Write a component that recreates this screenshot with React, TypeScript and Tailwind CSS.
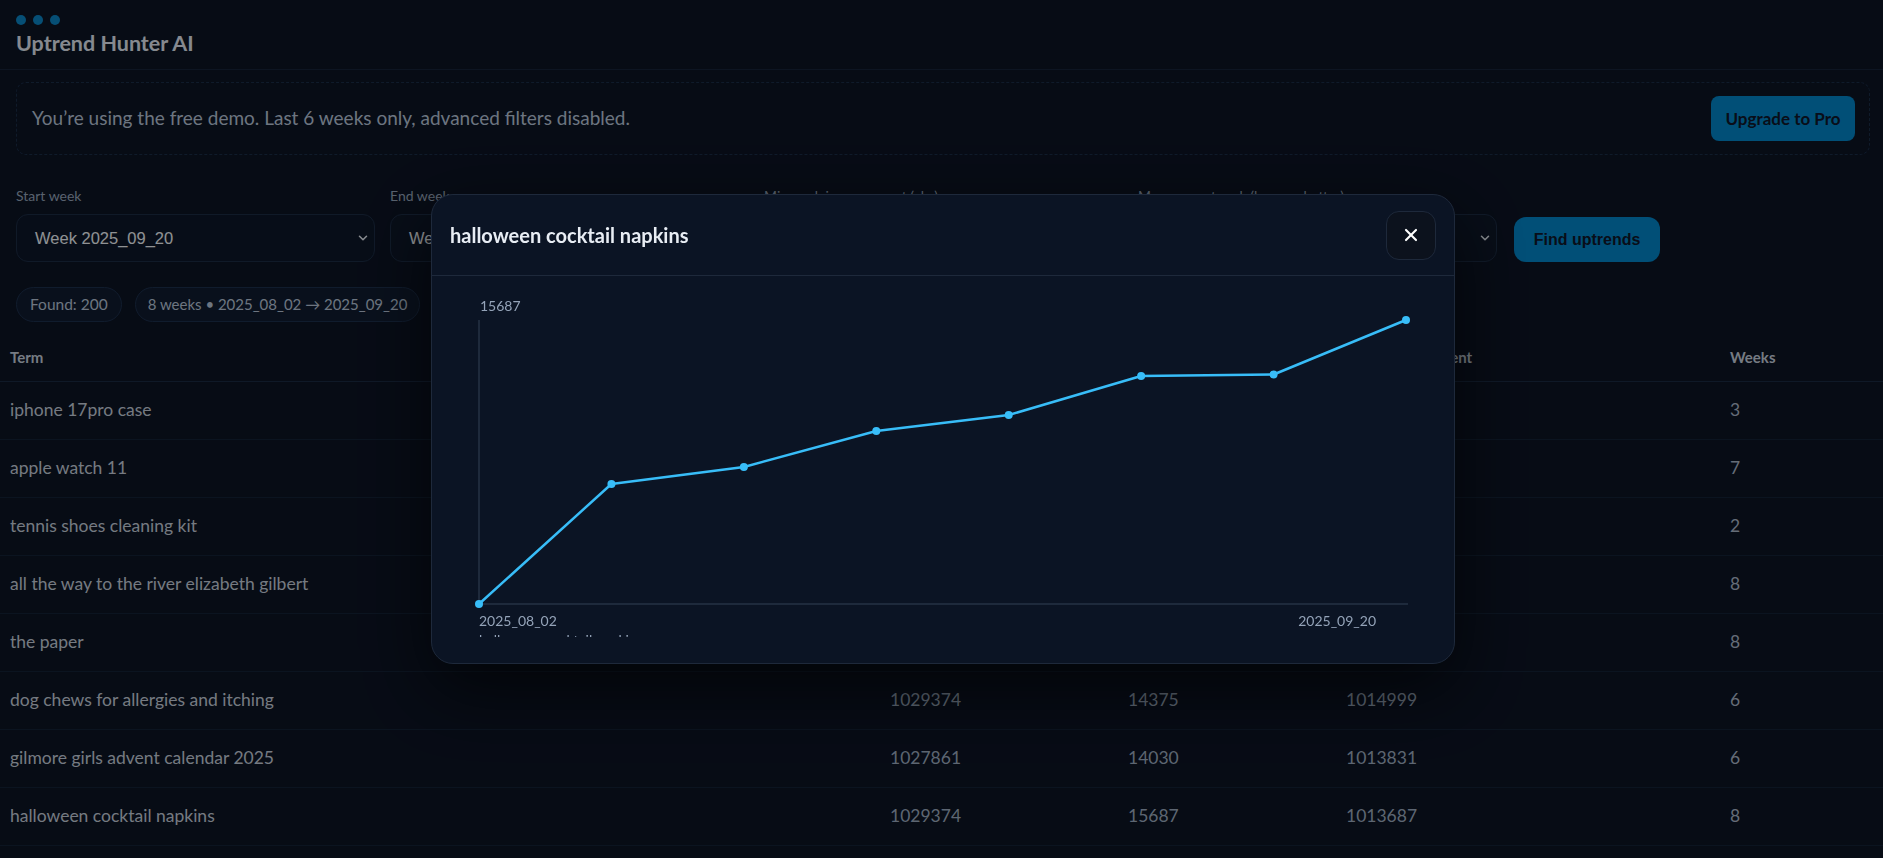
import React, { ReactNode, useState } from 'react';
import { ChevronDown, X } from 'lucide-react';

type Row = {
    term: string;
    startRank: number;
    endRank: number;
    improvement: number;
    weeks: number;
};

const rows: Row[] = [
    { term: 'iphone 17pro case', startRank: 1031208, endRank: 24530, improvement: 1006678, weeks: 3 },
    { term: 'apple watch 11', startRank: 1028440, endRank: 19873, improvement: 1008567, weeks: 7 },
    { term: 'tennis shoes cleaning kit', startRank: 1030117, endRank: 21904, improvement: 1008213, weeks: 2 },
    { term: 'all the way to the river elizabeth gilbert', startRank: 1027702, endRank: 16455, improvement: 1011247, weeks: 8 },
    { term: 'the paper', startRank: 1029011, endRank: 17320, improvement: 1011691, weeks: 8 },
    { term: 'dog chews for allergies and itching', startRank: 1029374, endRank: 14375, improvement: 1014999, weeks: 6 },
    { term: 'gilmore girls advent calendar 2025', startRank: 1027861, endRank: 14030, improvement: 1013831, weeks: 6 },
    { term: 'halloween cocktail napkins', startRank: 1029374, endRank: 15687, improvement: 1013687, weeks: 8 },
];

const trend = [0, 6628, 7567, 9556, 10440, 12594, 12677, 15687];

interface ModalProps {
    isOpen: boolean;
    onClose: () => void;
    title?: string;
    children: ReactNode;
}

const Modal: React.FC<ModalProps> = ({ isOpen, onClose, title, children }) => {
    if (!isOpen) return null;
    return (
        <div className="fixed inset-0 z-50 flex items-center justify-center bg-black/40">
            <div className="ml-[3px] w-[1024px] overflow-hidden rounded-[22px] border border-[#1e293b] bg-[#0b1424] shadow-[0_25px_70px_rgba(0,0,0,0.65)]">
                <div className="flex h-[81px] items-center justify-between border-b border-[#1e293b] px-[18px]">
                    <h3 className="text-[20px] font-bold text-[#e8edf4]">{title}</h3>
                    <button
                        onClick={onClose}
                        className="flex h-[49px] w-[50px] items-center justify-center rounded-[13px] border border-[#1e293b] bg-[#0c121d] text-white"
                        aria-label="Close"
                    >
                        <X size={20} strokeWidth={2.6} />
                    </button>
                </div>
                <div className="px-6 pt-[13px] pb-[26px]">{children}</div>
            </div>
        </div>
    );
};

const TrendChart: React.FC<{ values: number[]; label: string }> = ({ values, label }) => {
    const max = Math.max(...values);
    const left = 23;
    const right = 950;
    const top = 31;
    const bottom = 315;
    const step = (right - left) / (values.length - 1);
    const pts = values.map((v, i) => [left + i * step, bottom - (v / max) * (bottom - top)]);
    const d = pts.map((p, i) => `${i === 0 ? 'M' : 'L'}${p[0].toFixed(1)},${p[1].toFixed(1)}`).join(' ');

    return (
        <div className="h-[348px] overflow-hidden">
            <svg width="976" height="370" className="block text-[14px]">
                <line x1={left} y1={top} x2={left} y2={bottom} stroke="#334155" strokeWidth="1" />
                <line x1={left} y1={bottom} x2={952} y2={bottom} stroke="#334155" strokeWidth="1" />
                <text x={24} y={22} fill="#94a3b8">15687</text>
                <path d={d} fill="none" stroke="#38bdf8" strokeWidth="2.5" strokeLinejoin="round" />
                {pts.map((p, i) => (
                    <circle key={i} cx={p[0]} cy={p[1]} r="4" fill="#38bdf8" />
                ))}
                <text x={left} y={337} fill="#94a3b8">2025_08_02</text>
                <text x={920} y={337} fill="#94a3b8" textAnchor="end">2025_09_20</text>
                <text x={left} y={356} fill="#94a3b8">{label}</text>
            </svg>
        </div>
    );
};

const Field: React.FC<{ label: string; value: string }> = ({ label, value }) => (
    <div className="w-[359px] shrink-0">
        <div className="mb-2 text-[14px] leading-5 text-[#94a3b8]">{label}</div>
        <div className="flex h-12 items-center justify-between rounded-xl border border-[#1c2c44] bg-[#0d1728] pr-[4px] pl-[18px]">
            <span className="font-['Liberation_Sans',Arial,sans-serif] text-[16.5px] text-[#eef2f7]">{value}</span>
            <ChevronDown size={14} strokeWidth={2.6} className="text-[#e2e8f0]" />
        </div>
    </div>
);

export default function App() {
    const [open, setOpen] = useState(true);

    return (
        <div className="min-h-screen bg-[#0c1424] font-['Lato','Noto_Sans',sans-serif] text-[#cbd5e1]">
            <header className="flex h-[70px] flex-col border-b border-[#17243a] px-4 pt-[15px]">
                <div className="flex gap-[7px]">
                    <span className="h-[10px] w-[10px] rounded-full bg-[#0a84c4]" />
                    <span className="h-[10px] w-[10px] rounded-full bg-[#0a84c4]" />
                    <span className="h-[10px] w-[10px] rounded-full bg-[#0a84c4]" />
                </div>
                <h1 className="mt-[6px] text-[21.5px] leading-6 font-bold text-[#dfe5ee]">Uptrend Hunter AI</h1>
            </header>

            <main className="px-4">
                <div className="mt-[12px] mr-[-3px] flex h-[73px] items-center justify-between rounded-[10px] border border-dashed border-[#1a2d47] pr-[14px] pl-[15px]">
                    <p className="text-[19px] text-[#b6c3d6]">
                        You’re using the free demo. Last 6 weeks only, advanced filters disabled.
                    </p>
                    <button className="h-[45px] w-[144px] rounded-lg bg-[#0284c7] text-[17px] font-bold text-[#0f172a]">
                        Upgrade to Pro
                    </button>
                </div>

                <div className="mt-[31px] flex items-end gap-[15px]">
                    <Field label="Start week" value="Week 2025_09_20" />
                    <Field label="End week" value="Week 2025_09_20" />
                    <Field label="Min. rank improvement (abs)" value="500000" />
                    <Field label="Max. current rank (lower = better)" value="50000" />
                    <button className="ml-[2px] h-[45px] w-[146px] rounded-xl bg-[#0284c7] font-['Liberation_Sans',Arial,sans-serif] text-[16px] font-bold text-[#0f172a]">
                        Find uptrends
                    </button>
                </div>

                <div className="mt-[25px] flex gap-[13px]">
                    <span className="flex h-[35px] items-center rounded-full border border-[#1c2f4b] bg-[#101c30] px-[13px] text-[15.5px] text-[#b6c3d6]">
                        Found: 200
                    </span>
                    <span className="flex h-[35px] items-center rounded-full border border-[#1c2f4b] bg-[#101c30] px-[12px] text-[15px] text-[#b6c3d6]">
                        8 weeks • 2025_08_02 → 2025_09_20
                    </span>
                </div>
            </main>

            <div className="mt-[12px]">
                <div className="grid h-[48px] grid-cols-[880px_238px_218px_384px_1fr] items-center border-b border-[#1a2a42] text-[15px] font-bold text-[#c4cedb]">
                    <div className="px-[10px]">Term</div>
                    <div className="px-[10px]">Start rank</div>
                    <div className="px-[10px]">Current rank</div>
                    <div className="px-[10px]">Rank improvement</div>
                    <div className="px-[10px]">Weeks</div>
                </div>
                {rows.map((r) => (
                    <div
                        key={r.term}
                        className="grid h-[58px] grid-cols-[880px_238px_218px_384px_1fr] items-center border-b border-[#132236] text-[17.5px]"
                    >
                        <div className="px-[10px] text-[#c3ccd8]">{r.term}</div>
                        <div className="px-[10px] text-[#9cabbf]">{r.startRank}</div>
                        <div className="px-[10px] text-[#9cabbf]">{r.endRank}</div>
                        <div className="px-[10px] text-[#9cabbf]">{r.improvement}</div>
                        <div className="px-[10px] text-[#a9b6c7]">{r.weeks}</div>
                    </div>
                ))}
            </div>

            <Modal isOpen={open} onClose={() => setOpen(false)} title="halloween cocktail napkins">
                <TrendChart values={trend} label="halloween cocktail napkins" />
            </Modal>
        </div>
    );
}
